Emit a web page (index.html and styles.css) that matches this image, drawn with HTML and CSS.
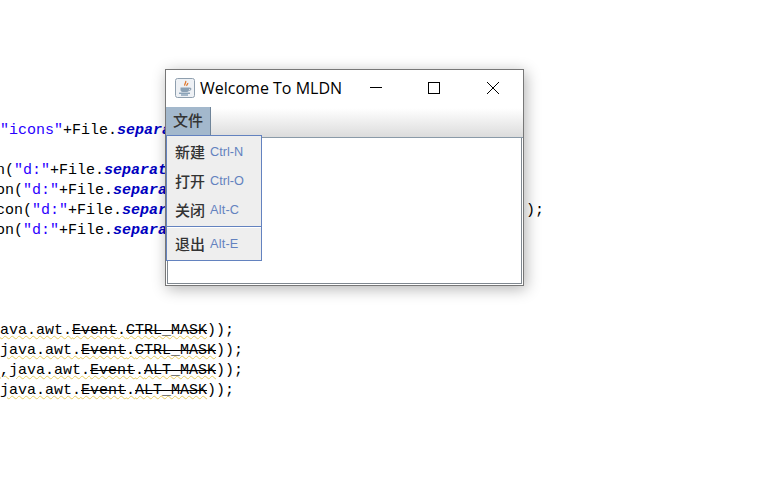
FILE: index.html
```html
<!DOCTYPE html>
<html lang="zh">
<head>
<meta charset="utf-8">
<title>Welcome To MLDN</title>
<link rel="stylesheet" href="styles.css">
</head>
<body>
<main class="editor">
  <div class="code code-top">
    <div class="line line-first"><span class="str">"icons"</span>+File.<span class="field">separator</span></div>
    <div class="line"></div>
    <div class="line">n(<span class="str">"d:"</span>+File.<span class="field">separator</span></div>
    <div class="line">on(<span class="str">"d:"</span>+File.<span class="field">separator</span></div>
    <div class="line">con(<span class="str">"d:"</span>+File.<span class="field">separator</span>+<span class="str">"icons"</span>+File.<span class="field">separator</span>+<span class="str tight">"close.gif"</span>));</div>
    <div class="line">on(<span class="str">"d:"</span>+File.<span class="field">separator</span></div>
  </div>
  <div class="code code-bottom">
    <div class="line"><span class="warn">ava.awt.<s>Event</s>.<s>CTRL_MASK</s></span>));</div>
    <div class="line"><span class="warn">java.awt.<s>Event</s>.<s>CTRL_MASK</s></span>));</div>
    <div class="line"><span class="warn">,java.awt.<s>Event</s>.<s>ALT_MASK</s></span>));</div>
    <div class="line"><span class="warn">java.awt.<s>Event</s>.<s>ALT_MASK</s></span>));</div>
  </div>
</main>

<section class="window">
  <header class="titlebar">
    <span class="app-icon">
      <svg viewBox="0 0 20 20" width="20" height="20" aria-hidden="true">
        <rect x="0.5" y="0.5" width="19" height="19" rx="2" fill="#eef1f5" stroke="#8f9fae"/>
        <path d="M10.5 3c1.4 1.6-1.6 2.6-.6 4.6M12.6 5c.8 1.2-1.4 1.6-.7 2.8" fill="none" stroke="#e0762a" stroke-width="1.3"/>
        <path d="M5.5 9.5h8.5v2.6c0 1.2-1 1.9-2 1.9H7.5c-1 0-2-.7-2-1.9z" fill="#8aa0b4"/>
        <path d="M14 10.2h1.2c1.2 0 1 2-.9 2.2" fill="none" stroke="#6d8398" stroke-width="1"/>
        <path d="M4 15.2h11M6 17h7" stroke="#5d7f9c" stroke-width="1"/>
      </svg>
    </span>
    <span class="title">Welcome To MLDN</span>
    <div class="controls">
      <span class="control">
        <svg viewBox="0 0 14 14" width="14" height="14" aria-hidden="true"><path d="M2 6.5h12" stroke="#000" stroke-width="1"/></svg>
      </span>
      <span class="control">
        <svg viewBox="0 0 14 14" width="14" height="14" aria-hidden="true"><rect x="1.5" y="1.5" width="11" height="11" fill="none" stroke="#000"/></svg>
      </span>
      <span class="control">
        <svg viewBox="0 0 14 14" width="14" height="14" aria-hidden="true"><path d="M1 1l12 12M13 1L1 13" stroke="#000" stroke-width="1"/></svg>
      </span>
    </div>
  </header>
  <nav class="menubar">
    <span class="menu-title">文件</span>
  </nav>
  <div class="content"></div>
  <ul class="popup">
    <li class="item"><span class="label">新建</span><span class="accel">Ctrl-N</span></li>
    <li class="item"><span class="label">打开</span><span class="accel">Ctrl-O</span></li>
    <li class="item"><span class="label">关闭</span><span class="accel wide">Alt-C</span></li>
    <li class="separator"></li>
    <li class="item"><span class="label">退出</span><span class="accel wide">Alt-E</span></li>
  </ul>
</section>
</body>
</html>
```
FILE: styles.css
```css
* { box-sizing: border-box; }
html, body { margin: 0; height: 100%; background: #fff; overflow: hidden; }
body { position: relative; width: 780px; height: 489px; }

.editor { width: 780px; height: 489px; padding-top: 121px; overflow: hidden; }
.code { font: 15px/20px "Liberation Mono", monospace; color: #000; }
.code-top { margin-left: -4px; }
.code-bottom { margin-top: 80px; }
.line { height: 20px; white-space: pre; }
.line-first { padding-left: 4px; }
.str { color: #2a00ff; }
.str.tight { letter-spacing: -.1px; }
.field { color: #0000c0; font-weight: bold; font-style: italic; }
.warn { text-decoration: underline wavy #e8cc60 1px; text-underline-offset: 1px; }
.warn s { text-decoration: line-through #000 1px; }

.window {
  position: absolute; left: 165px; top: 69px; width: 359px; height: 217px;
  background: #fff; border: 1px solid #777;
  box-shadow: 2px 3px 14px rgba(0,0,0,.3);
  display: flex; flex-direction: column;
}
.titlebar { height: 37px; display: flex; align-items: center; padding-left: 9px; background: #fff; flex: none; }
.app-icon { width: 20px; height: 20px; display: block; flex: none; margin-top: -1px; }
.app-icon svg, .control svg { display: block; }
.title { margin-left: 5px; margin-top: -2px; font: 16px "Open Sans", sans-serif; color: #000; }
.controls { margin-left: auto; display: flex; height: 100%; padding-right: 1px; }
.control { width: 59px; display: flex; align-items: center; justify-content: center; margin-top: -1px; }

.menubar { height: 31px; flex: none; display: flex; align-items: flex-start; background: linear-gradient(#fff 0, #fff 4%, #dcdcdc 100%); border-bottom: 1px solid #8a9aa8; }
.menu-title {
  width: 45px; height: 28px; background: #a3b8cc; color: #333; border-right: 1px solid #6f8499;
  font: 500 15px/26px "Noto Sans CJK SC", sans-serif; text-align: center;
}
.content { flex: 1; background: #fff; border: 1px solid #808890; border-top: 0; margin: 0 1px 1px; }

.popup {
  position: absolute; left: 0; top: 65px; width: 96px; height: 126px; margin: 0; padding: 1px 0 0; list-style: none;
  background: #eee; border: 1px solid #6382bf;
}
.item { height: 29px; display: flex; align-items: center; padding-left: 8px; gap: 5px; }
.label { font: 500 15px/20px "Noto Sans CJK SC", sans-serif; color: #333; }
.accel { font: 12.7px "Liberation Sans", sans-serif; color: #6382bf; }
.accel.wide { letter-spacing: .2px; }
.separator { height: 2px; margin: 2px 0 1px; border-top: 1px solid #6382bf; background: #fff; }
```
